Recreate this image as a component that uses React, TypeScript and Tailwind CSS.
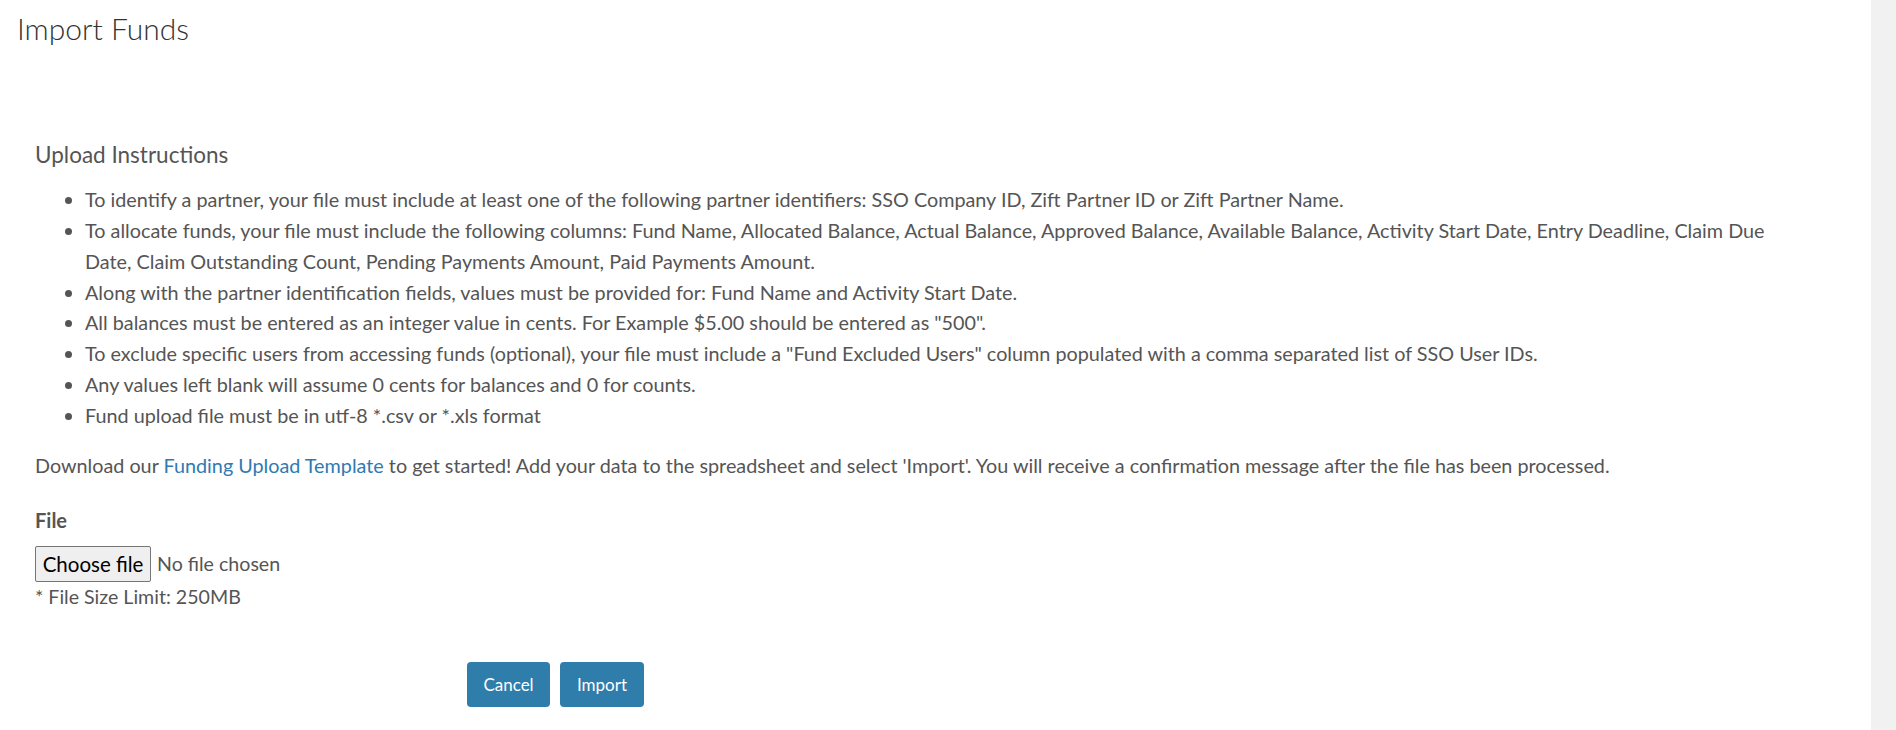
const instructions: string[] = [
  "To identify a partner, your file must include at least one of the following partner identifiers: SSO Company ID, Zift Partner ID or Zift Partner Name.",
  "To allocate funds, your file must include the following columns: Fund Name, Allocated Balance, Actual Balance, Approved Balance, Available Balance, Activity Start Date, Entry Deadline, Claim Due Date, Claim Outstanding Count, Pending Payments Amount, Paid Payments Amount.",
  "Along with the partner identification fields, values must be provided for: Fund Name and Activity Start Date.",
  'All balances must be entered as an integer value in cents. For Example $5.00 should be entered as "500".',
  'To exclude specific users from accessing funds (optional), your file must include a "Fund Excluded Users" column populated with a comma separated list of SSO User IDs.',
  "Any values left blank will assume 0 cents for balances and 0 for counts.",
  "Fund upload file must be in utf-8 *.csv or *.xls format",
];

export default function App() {
  return (
    <div className="flex h-[730px] w-full bg-white font-['Lato','Liberation_Sans',sans-serif] text-[#555]">
      <main className="flex-1 overflow-hidden">
        {/* Page title */}
        <h1 className="pl-[17px] pt-[10px] text-[30px] leading-[36px] font-light text-[#333]">
          Import Funds
        </h1>

        <section className="pl-[35px] pr-[80px] pt-[94px]">
          <h2 className="text-[22.5px] leading-[30px] font-normal text-[#555]">
            Upload Instructions
          </h2>

          <ul className="mt-[14px] list-disc pl-[50px] text-[19.8px] leading-[30.86px] marker:text-[#555]">
            {instructions.map((item) => (
              <li key={item}>{item}</li>
            ))}
          </ul>

          <p className="mt-[19px] text-[19.8px] leading-[31px]">
            Download our{" "}
            <a href="#" className="text-[#2f7ab2]">
              Funding Upload Template
            </a>{" "}
            to get started! Add your data to the spreadsheet and select 'Import'. You will receive a
            confirmation message after the file has been processed.
          </p>

          {/* File input */}
          <div className="mt-[25px]">
            <label className="block text-[20px] leading-[28px] font-bold text-[#555]">File</label>
            <div className="mt-[12px] flex items-center gap-[6px]">
              <button
                type="button"
                className="h-[36px] w-[116px] rounded-[2px] border border-[#767676] bg-[#efefef] text-[20.5px] leading-none text-black"
              >
                Choose file
              </button>
              <span className="text-[19.6px] text-[#555]">No file chosen</span>
            </div>
            <p className="text-[19.6px] leading-[30px]">* File Size Limit: 250MB</p>
          </div>

          {/* Actions */}
          <div className="mt-[50px] flex gap-[10px] pl-[432px]">
            <button
              type="button"
              className="h-[45px] w-[83px] rounded-[4px] bg-[#2e7dab] text-[17px] text-white"
            >
              Cancel
            </button>
            <button
              type="button"
              className="h-[45px] w-[84px] rounded-[4px] bg-[#2e7dab] text-[17px] text-white"
            >
              Import
            </button>
          </div>
        </section>
      </main>

      {/* Scrollbar track */}
      <div className="w-[25px] shrink-0 bg-[#f1f1f1]" />
    </div>
  );
}
